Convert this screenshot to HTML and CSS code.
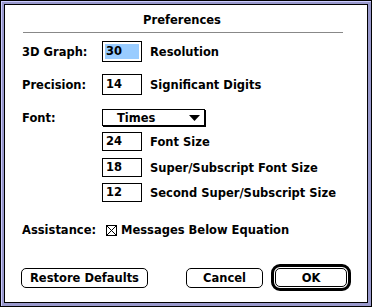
FILE: index.html
```html
<!DOCTYPE html>
<html lang="en">

<head>
	<meta charset="UTF-8">
	<title>Preferences</title>
	<link rel="stylesheet" href="styles.css">
</head>

<body>

	<!-- Window frame -->
	<div class="frame">
	<div class="dialog">

		<div class="title">Preferences</div>
		<div class="rule"></div>

		<!-- Graph & precision -->
		<div class="row row-graph">
			<span class="label">3D Graph:</span>
			<span class="field field-tall"><span class="hilite">30</span></span>
			<span class="desc">Resolution</span>
		</div>
		<div class="row row-prec">
			<span class="label">Precision:</span>
			<span class="field field-tall">14</span>
			<span class="desc">Significant Digits</span>
		</div>

		<!-- Font settings -->
		<div class="row row-font">
			<span class="label">Font:</span>
			<span class="popup">
				<span class="popup-text">Times</span>
				<svg class="popup-arrow" width="11" height="6" viewBox="0 0 11 6"><polygon points="0,0 11,0 5.5,6" fill="#000"/></svg>
			</span>
		</div>
		<div class="row row-size1">
			<span class="label"></span>
			<span class="field">24</span>
			<span class="desc">Font Size</span>
		</div>
		<div class="row row-size2">
			<span class="label"></span>
			<span class="field">18</span>
			<span class="desc">Super/Subscript Font Size</span>
		</div>
		<div class="row row-size3">
			<span class="label"></span>
			<span class="field">12</span>
			<span class="desc">Second Super/Subscript Size</span>
		</div>

		<!-- Assistance -->
		<div class="row row-assist">
			<span class="label">Assistance:</span>
			<svg class="check" width="11" height="11" viewBox="0 0 11 11">
				<rect x="0.5" y="0.5" width="10" height="10" fill="#fff" stroke="#000"/>
				<path d="M1 1 L10 10 M10 1 L1 10" stroke="#000" stroke-width="1"/>
			</svg>
			<span class="check-text">Messages Below Equation</span>
		</div>

		<!-- Buttons -->
		<div class="buttons">
			<button class="btn btn-restore">Restore Defaults</button>
			<button class="btn btn-cancel">Cancel</button>
			<span class="default-ring"><button class="btn btn-ok">OK</button></span>
		</div>

	</div>
	</div>

</body>

</html>
```

FILE: styles.css
```css
body
{
	margin: 0;
	width: 372px;
	height: 307px;
	font-family: "DejaVu Sans", sans-serif;
	font-weight: bold;
	font-size: 11.5px;
	color: #000;
}

.frame
{
	box-sizing: border-box;
	width: 372px;
	height: 307px;
	border: 1px solid #000;
	padding: 3px;
	background-color: #9999cc;
	box-shadow: inset 1px 1px 0 #ccccff;
}

.dialog
{
	box-sizing: border-box;
	height: 100%;
	border: 1px solid #000;
	background-color: #fff;
	padding: 7px 16px 0 17px;
	display: flex;
	flex-direction: column;
}

.title
{
	height: 16px;
	line-height: 16px;
	text-align: center;
	padding-right: 9px;
}

.rule
{
	height: 1px;
	margin: 4px 8px 0 1px;
	background-color: #888;
}

.row
{
	display: flex;
	align-items: center;
	white-space: nowrap;
}

.label
{
	width: 80px;
	flex-shrink: 0;
}

.row-graph { margin-top: 8px; }
.row-prec { margin-top: 12px; }
.row-font { margin-top: 14px; }
.row-size1 { margin-top: 6px; }
.row-size2 { margin-top: 7px; }
.row-size3 { margin-top: 6px; }
.row-assist { margin-top: 21px; }

.field
{
	box-sizing: border-box;
	width: 40px;
	height: 19px;
	border: 1px solid #000;
	padding-left: 3px;
	line-height: 17px;
	display: flex;
	align-items: center;
}

.field-tall
{
	height: 21px;
}

.hilite
{
	background-color: #99ccff;
	width: 34px;
	height: 15px;
	line-height: 15px;
	margin-left: -1px;
	padding-left: 1px;
	box-sizing: border-box;
}

.desc
{
	margin-left: 8px;
}

.popup
{
	box-sizing: border-box;
	width: 103px;
	height: 17px;
	border: 1px solid #000;
	box-shadow: 1px 1px 0 #000;
	display: flex;
	align-items: center;
	padding: 0 4px 0 14px;
}

.popup-text
{
	flex: 1;
}

.check
{
	margin-left: 4px;
	flex-shrink: 0;
}

.check-text
{
	margin-left: 4px;
}

.buttons
{
	margin-top: 27px;
	display: flex;
	align-items: center;
}

.btn
{
	box-sizing: border-box;
	height: 20px;
	border: 1px solid #000;
	border-radius: 5px;
	background-color: #fff;
	font-family: inherit;
	font-weight: bold;
	font-size: 11.5px;
	color: #000;
	padding: 0;
	line-height: 18px;
}

.btn-restore
{
	width: 127px;
	margin-left: -1px;
}

.btn-cancel
{
	width: 77px;
	margin-left: auto;
}

.default-ring
{
	box-sizing: border-box;
	width: 80px;
	height: 27px;
	margin-left: 8px;
	border: 3px solid #000;
	border-radius: 9px;
	padding: 1px;
	display: flex;
}

.btn-ok
{
	width: 100%;
	height: 100%;
}
```
